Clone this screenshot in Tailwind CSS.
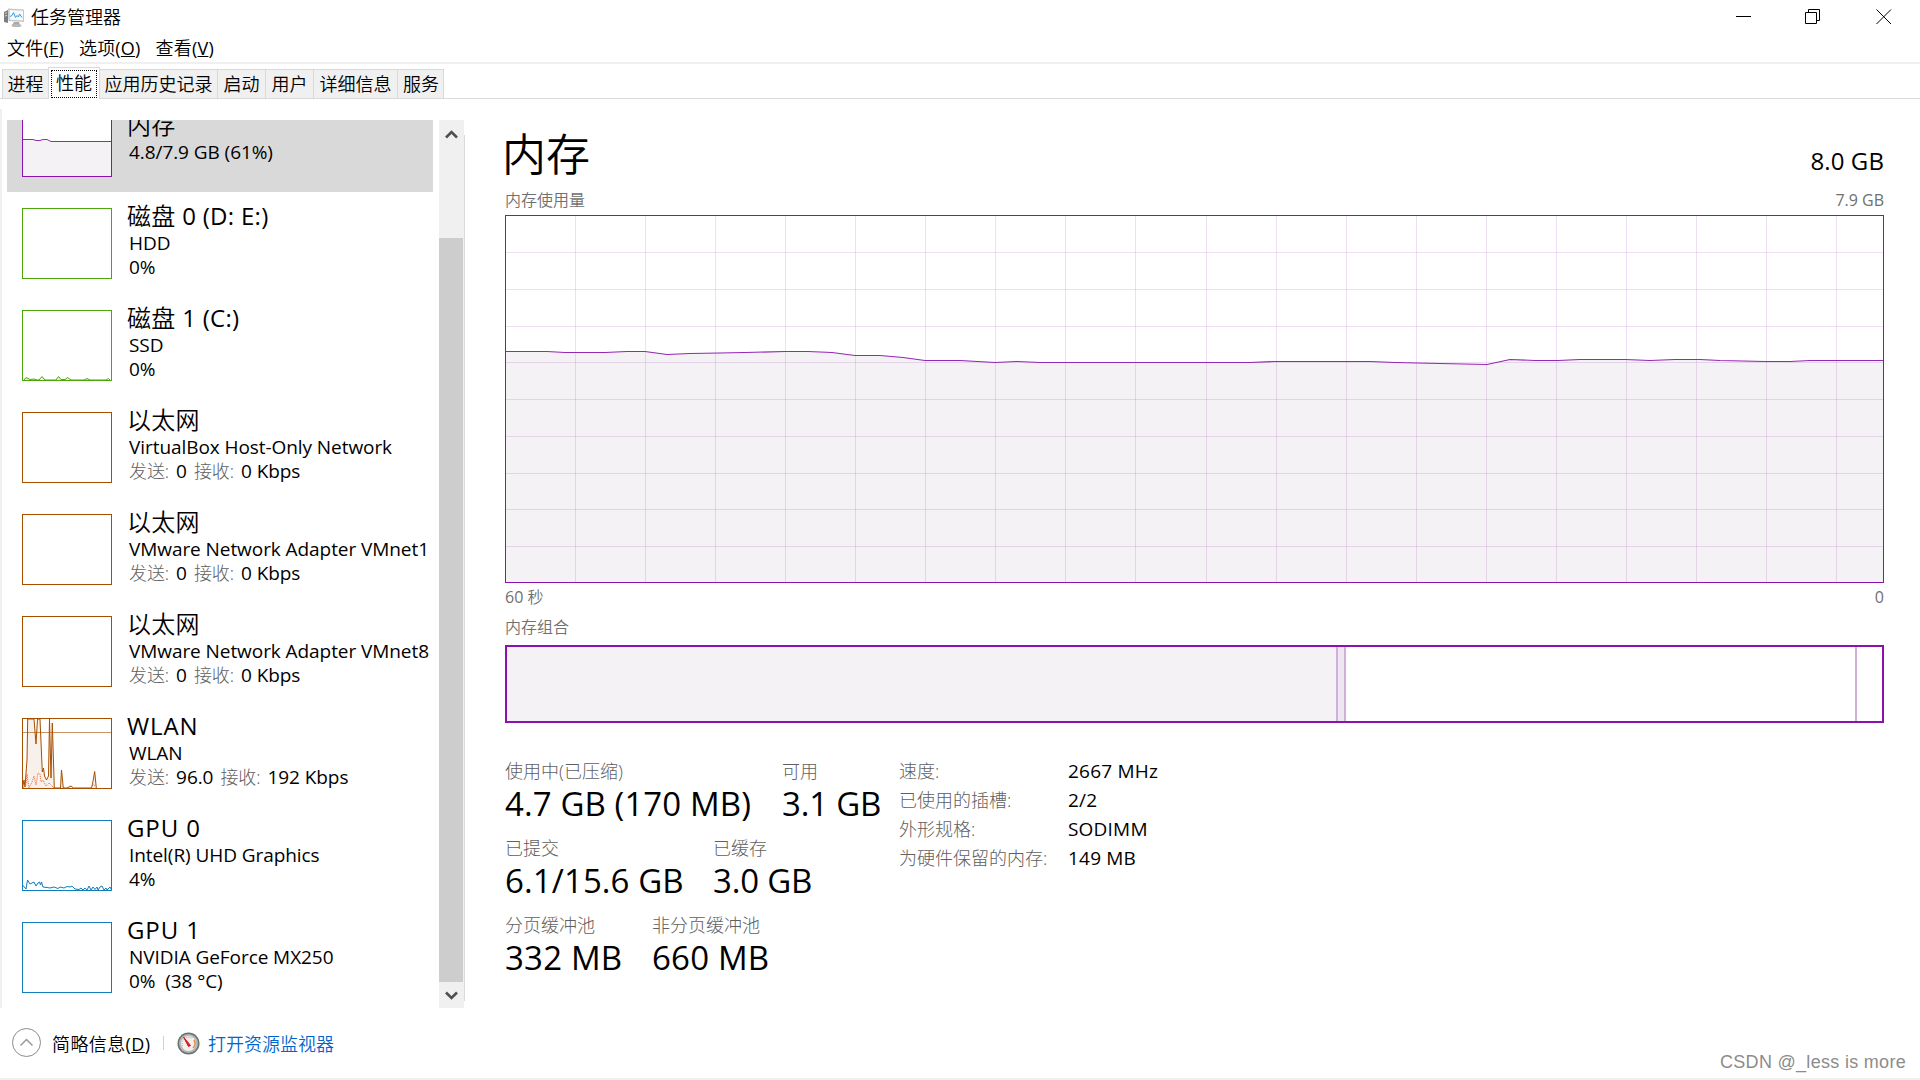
<!DOCTYPE html>
<html lang="zh-CN">
<head>
  <meta charset="UTF-8" />
  <meta name="viewport" content="width=device-width, initial-scale=1.0" />
  <title>任务管理器</title>
  <script src="https://cdn.jsdelivr.net/npm/@tailwindcss/browser@4"></script>
  <style>
    body { font-family: 'Open Sans', 'Noto Sans CJK SC', sans-serif; }
  </style>
</head>
<body class="bg-white text-black w-[1920px] h-[1080px] overflow-hidden flex flex-col text-[18px]">
  <!-- title bar -->
  <header class="h-9 flex items-center justify-between shrink-0">
    <div class="flex items-center gap-[7px] pl-1">
      <svg width="20" height="20" viewBox="0 0 20 20">
        <path d="M0 4l4-2v13l-4-1z" fill="#7d7d7d"/>
        <path d="M1 5.500l2-1M1 8l2-.6" stroke="#e8e8e8" stroke-width=".8"/>
        <path d="M4 .500l16.500 1v12.500l-16-1z" fill="#c3c6c7"/>
        <path d="M5.500 2l13.500 .8v9.700l-13-.8z" fill="#f4fafe"/>
        <path d="M6 8.500l2-1 1.500-3 2 5 1.500-2 1.500 1.500 1-3 2.500 3.500" fill="none" stroke="#3f9ad6" stroke-width="1"/>
        <path d="M10 14h5l1 3H8z" fill="#aaa"/>
        <ellipse cx="12.500" cy="17.500" rx="5" ry="1.500" fill="#b8b8b8"/>
      </svg>
      <span class="-mt-px font-[350]">任务管理器</span>
    </div>
    <div class="flex items-center pr-[28px] -mt-0.5">
      <svg width="16" height="16" viewBox="0 0 16 16" stroke="#000" fill="none"><path d="M0 7.500h15"/></svg>
      <svg class="ml-[53px]" width="16" height="16" viewBox="0 0 16 16" stroke="#000" fill="none"><path d="M.5 3.500h11v11H.5zM3.500 3V.5h11v11H12"/></svg>
      <svg class="ml-[55px]" width="16" height="16" viewBox="0 0 16 16" stroke="#000" fill="none"><path d="M.5.500l14.500 14.500M15 .5L.5 15"/></svg>
    </div>
  </header>

  <!-- menu -->
  <nav class="h-[30px] -mt-0.5 pl-[7px] flex items-center gap-[15px] shrink-0 border-b-2 border-[#f0f0f0] tracking-[0.2px] font-[350]">
    <span>文件<span class="font-normal">(<u>F</u>)</span></span>
    <span>选项<span class="font-normal">(<u>O</u>)</span></span>
    <span>查看<span class="font-normal">(<u>V</u>)</span></span>
  </nav>

  <!-- tabs -->
  <div class="h-[35px] shrink-0 border-b border-[#d9d9d9] flex items-end pl-[2px] font-[350]">
    <div class="flex items-end h-[32px] -mb-px">
      <div class="w-[46px] h-[30px] border border-r-0 border-[#d9d9d9] bg-[#f0f0f0] flex items-center justify-center">进程</div>
      <div class="w-[52px] h-[32px] border border-b-0 border-[#d9d9d9] bg-white p-[2px] pb-[1px]"><div class="h-full border border-dotted border-black flex items-center justify-center pb-px">性能</div></div>
      <div class="w-[117px] h-[30px] border border-x-0 border-[#d9d9d9] bg-[#f0f0f0] flex items-center justify-center">应用历史记录</div>
      <div class="w-[48px] h-[30px] border border-r-0 border-[#d9d9d9] bg-[#f0f0f0] flex items-center justify-center">启动</div>
      <div class="w-[48px] h-[30px] border border-r-0 border-[#d9d9d9] bg-[#f0f0f0] flex items-center justify-center">用户</div>
      <div class="w-[84px] h-[30px] border border-r-0 border-[#d9d9d9] bg-[#f0f0f0] flex items-center justify-center">详细信息</div>
      <div class="w-[47px] h-[30px] border border-[#d9d9d9] bg-[#f0f0f0] flex items-center justify-center pl-px">服务</div>
    </div>
  </div>

  <main class="h-[909px] shrink-0 flex pt-[10px]">
    <div class="w-[2px] bg-[#f0f0f0]"></div>

    <!-- device list -->
    <div id="devices" class="ml-[5px] mt-[11px] w-[426px] h-[888px] overflow-hidden flex flex-col justify-end whitespace-nowrap"></div>

    <!-- scrollbar -->
    <div class="ml-[6px] mt-[11px] w-[25px] h-[888px] bg-[#f0f0f0] flex flex-col">
      <div class="h-[118px] pt-[9px] flex justify-center"><svg width="13" height="11" viewBox="0 0 13 11" fill="none" stroke="#505050" stroke-width="2.600"><path d="M1 8.500l5.500-5.500L12 8.500"/></svg></div>
      <div class="h-[744px] w-[24px] bg-[#cdcdcd]"></div>
      <div class="h-[26px] pt-[9px] flex justify-center"><svg width="13" height="11" viewBox="0 0 13 11" fill="none" stroke="#505050" stroke-width="2.600"><path d="M1 1.500l5.500 5.500L12 1.500"/></svg></div>
    </div>
    <div class="mt-[26px] w-px h-[866px] bg-[#d9d9d9]"></div>

    <!-- memory details -->
    <section class="ml-[40px] w-[1379px] pt-[11px] flex flex-col">
      <div class="h-[66px] flex justify-between">
        <h1 class="text-[44px] leading-[68px] -ml-[3px] font-[350]">内存</h1>
        <span class="text-[24px] leading-[82px] tracking-[0.1px]">8.0 GB</span>
      </div>
      <div class="h-[29px] flex justify-between text-[16px] leading-[28px] text-[#707070]">
        <span class="font-[350]">内存使用量</span><span>7.9 GB</span>
      </div>
      <svg class="shrink-0" width="1379" height="368" viewBox="0 0 1379 368">
        <path fill="#f4f2f4" d="M0 136H42L60 137H100L122 136H140L162 139L185 138.500L215 137.500L240 137L280 136H303L327 137L350 140H375L398 142L420 145H455L490 147L512 146.500L535 147H745L770 146H865L890 147L935 148L982 149L1005 144.500L1030 145.500H1053L1075 144H1120L1145 145.500L1170 144H1195L1215 145L1260 146L1285 146.500L1305 145.500H1379V368H0Z"/>
        <g id="grid" stroke="#8b2aa8" stroke-opacity=".15" shape-rendering="crispEdges"></g>
        <path fill="none" stroke="#9528b4" stroke-width="1.100" d="M0 136.500H42L60 137.500H100L122 136.500H140L162 139.500L185 138.500L215 138L240 137.500L280 136.500H303L327 137.500L350 140.500H375L398 142.500L420 145.500H455L490 147.500L512 146.500L535 147.500H745L770 146.500H865L890 147.500L935 148.500L982 149.500L1005 144.500L1030 145.500H1053L1075 144.500H1120L1145 145.500L1170 144.500H1195L1215 145.500L1260 146.500H1285L1305 145.500H1379"/>
        <rect x=".5" y=".5" width="1378" height="367" fill="none" stroke="#8b12ae"/>
      </svg>
      <div class="h-[30px] flex justify-between text-[16px] leading-[29px] text-[#707070]">
        <span>60 <span class="font-[350]">秒</span></span><span>0</span>
      </div>
      <div class="h-[32px] text-[16px] leading-[29px] text-[#707070] font-[350]">内存组合</div>
      <div class="h-[78px] shrink-0 border-2 border-[#8b12ae] flex">
        <div class="w-[829px] bg-[#f4f2f4]"></div>
        <div class="w-[10px] border-x-2 border-[#cfb0da] bg-[#eee6f1]"></div>
        <div class="w-[511px] border-r-2 border-[#cfb0da]"></div>
      </div>

      <!-- numbers -->
      <div class="flex pt-[34px] whitespace-nowrap">
        <div class="w-[394px] text-[#606060]">
          <div class="h-[77px] flex">
            <div class="w-[277px]"><p class="leading-[28px] font-light">使用中(已压缩)</p><p class="text-[33px] leading-[38px] text-black tracking-[0.1px]">4.7 GB (170 MB)</p></div>
            <div><p class="leading-[28px] font-light">可用</p><p class="text-[33px] leading-[38px] text-black tracking-[-0.2px]">3.1 GB</p></div>
          </div>
          <div class="h-[77px] flex">
            <div class="w-[208px]"><p class="leading-[28px] font-light">已提交</p><p class="text-[33px] leading-[38px] text-black tracking-[0.1px]">6.1/15.6 GB</p></div>
            <div><p class="leading-[28px] font-light">已缓存</p><p class="text-[33px] leading-[38px] text-black tracking-[-0.2px]">3.0 GB</p></div>
          </div>
          <div class="h-[77px] flex">
            <div class="w-[147px]"><p class="leading-[28px] font-light">分页缓冲池</p><p class="text-[33px] leading-[38px] text-black tracking-[0.2px]">332 MB</p></div>
            <div><p class="leading-[28px] font-light">非分页缓冲池</p><p class="text-[33px] leading-[38px] text-black tracking-[0.2px]">660 MB</p></div>
          </div>
        </div>
        <div class="grid grid-cols-[169px_auto] auto-rows-[29px] content-start leading-[28px] text-[19px] tracking-[0.2px]">
          <span class="text-[#606060] text-[18px] font-light tracking-normal">速度:</span><span>2667 MHz</span>
          <span class="text-[#606060] text-[18px] font-light tracking-normal">已使用的插槽:</span><span>2/2</span>
          <span class="text-[#606060] text-[18px] font-light tracking-normal">外形规格:</span><span>SODIMM</span>
          <span class="text-[#606060] text-[18px] font-light tracking-normal">为硬件保留的内存:</span><span>149 MB</span>
        </div>
      </div>
    </section>
  </main>

  <!-- footer -->
  <footer class="h-[70px] shrink-0 flex items-center pl-[12px]">
    <svg width="30" height="30" viewBox="0 0 30 30" fill="none" stroke="#8a8a8a"><circle cx="14.500" cy="14.500" r="14"/><path d="M8.500 17.500l6-6 6 6" stroke-width="1.500" stroke="#999"/></svg>
    <span class="ml-[10px] mt-[2px] w-[100px] tracking-[0.4px] font-[350] whitespace-nowrap">简略信息<span class="font-normal">(<u>D</u>)</span></span>
    <div class="ml-[11px] w-px h-[14px] bg-[#d0d0d0]"></div>
    <svg class="ml-[13px]" width="23" height="23" viewBox="0 0 23 23">
      <circle cx="11.500" cy="11.500" r="11" fill="#6a7070"/>
      <circle cx="11.500" cy="11.500" r="9.500" fill="#b4b8b8"/>
      <circle cx="11.500" cy="11.500" r="7.500" fill="#f2efec"/>
      <path d="M5.500 14a6.500 6.500 0 0 1 9-8" fill="none" stroke="#aaa" stroke-dasharray="1 1"/>
      <path d="M17 8a6.500 6.500 0 0 1-1 8" fill="none" stroke="#e08a4a" stroke-width="1.500"/>
      <path d="M6.500 5l7 8.500-2 1z" fill="#d8151b" stroke="#d8151b"/>
    </svg>
    <span class="ml-[8px] mt-[2px] text-[#0066cc] font-[350]">打开资源监视器</span>
    <span class="ml-auto mr-[14px] mt-[38px] text-[18px] tracking-[0.3px] text-[#8c8c8c] font-['Liberation_Sans']">CSDN @_less is more</span>
  </footer>
  <div class="h-[2px] shrink-0 bg-[#f0f0f0]"></div>

  <script>
    const devices = [
      { name: '内存', lines: ['4.8/7.9 GB (61%)'], color: '#8b12ae', selected: true,
        chart: '<path d="M1 33H12L16 34.500L20 33L28 35H89V70H1Z" fill="#f4f2f4"/><path d="M0 33.500H11L14 34.500H18L21 33.500H25L29 35.500H89" fill="none" stroke="#9528b4"/>' },
      { name: '磁盘<span class="font-normal"> 0 (D: E:)</span>', lines: ['HDD', '0%'], color: '#4da60c', chart: '' },
      { name: '磁盘<span class="font-normal"> 1 (C:)</span>', lines: ['SSD', '0%'], color: '#4da60c',
        chart: '<path d="M2 70L4 67.500L8 69.500L12 69L15 70H17L20 66.500L23 70H34L36.500 66.500L39 69.500H43L45.500 67.500L49 70H62L65 68.500L68 70H84L86.500 68.500L88 70" fill="#e6f2dc" stroke="#4da60c"/>' },
      { name: '以太网', lines: ['VirtualBox Host-Only Network', ['0', '0 Kbps']], color: '#a74f01', chart: '' },
      { name: '以太网', lines: ['VMware Network Adapter VMnet1', ['0', '0 Kbps']], color: '#a74f01', chart: '' },
      { name: '以太网', lines: ['VMware Network Adapter VMnet8', ['0', '0 Kbps']], color: '#a74f01', chart: '' },
      { name: 'WLAN', lines: ['WLAN', ['96.0', '192 Kbps']], color: '#a74f01',
        chart: '<path d="M0 14.500H90" stroke="#c99668"/><path d="M.5 70L2 62L3 69L4 55L5 42L5.700 1H12L14 26L15.500 1H18L20.300 54L21.500 50L22.500 58L24.500 62L26.500 58L27.500 1L29 60L30.300 5L32.300 70H38.500L39.500 52L41.300 70H45L49 68L51.500 70H69.500L70.500 66L72.700 53.500L74.300 70" fill="#a74f01" fill-opacity=".08" stroke="#a74f01" stroke-linejoin="bevel"/><path d="M1 70L4 66L5 56L7 70L10 64L12 58L14 67L16 55L18 56L19 64L21 62L24 68L27 65L30 68L32 70M69 70L71 66L73 68" fill="none" stroke="#e8683c" stroke-dasharray="1 1"/>' },
      { name: 'GPU 0', lines: ['Intel(R) UHD Graphics', '4%'], color: '#117dbb',
        chart: '<path d="M.5 65L4 69L5.500 60L8 64L10 63L12 62L14 66L16 63L17.500 62L18.500 65L19.500 62L21 67L25 67.500L28 68L32 67L36 68.500L38 67L42 68L45 66.500L48 67L50 66L53 69L57 69.500L59 68L61 70L63 68L65 70L67 66L69 70L71 67L73 69.500L75 67L76 70L78 67L80 66L82 70L84 68L85 70L88 67L89 69" fill="none" stroke="#117dbb"/>' },
      { name: 'GPU 1', lines: ['NVIDIA GeForce MX250', '0%&nbsp; (38 °C)'], color: '#117dbb', chart: '' }
    ];

    function lineHtml(line) {
      if (!Array.isArray(line)) return line;
      return `<span class="text-[#606060] text-[18px] font-light">发送:</span><span class="ml-[7px] mr-[7px]">${line[0]}</span><span class="text-[#606060] text-[18px] font-light">接收:</span><span class="ml-[7px]">${line[1]}</span>`;
    }

    document.getElementById('devices').innerHTML = devices.map(d => `
      <div class="h-[102px] shrink-0 flex pl-[15px] ${d.selected ? 'bg-[#d9d9d9]' : ''}">
        <svg class="mt-[16px] shrink-0 bg-white" width="90" height="71" viewBox="0 0 90 71">
          ${d.chart}<rect x=".5" y=".5" width="89" height="70" fill="none" stroke="${d.color}"/>
        </svg>
        <div class="ml-[15px] ${d.selected ? 'pt-[21px]' : 'pt-[10px]'}">
          <p class="text-[24px] leading-[28px] ${/^[A-Z]/.test(d.name) ? 'tracking-[0.9px]' : 'tracking-[0.3px] font-[350]'}">${d.name}</p>
          <div class="pt-px pl-[2px] text-[19px] leading-[24px] tracking-[-0.07px]">
            ${d.lines.map(l => `<p class="h-[24px]">${lineHtml(l)}</p>`).join('')}
          </div>
        </div>
      </div>`).join('');

    let grid = '';
    for (let i = 1; i < 20; i++) grid += `<path d="M${Math.round(i * 70.05) + 0.5} 0V368"/>`;
    for (let i = 1; i < 10; i++) grid += `<path d="M0 ${Math.ceil(i * 36.75) + 0.5}H1379"/>`;
    document.getElementById('grid').innerHTML = grid;
  </script>
</body>
</html>
